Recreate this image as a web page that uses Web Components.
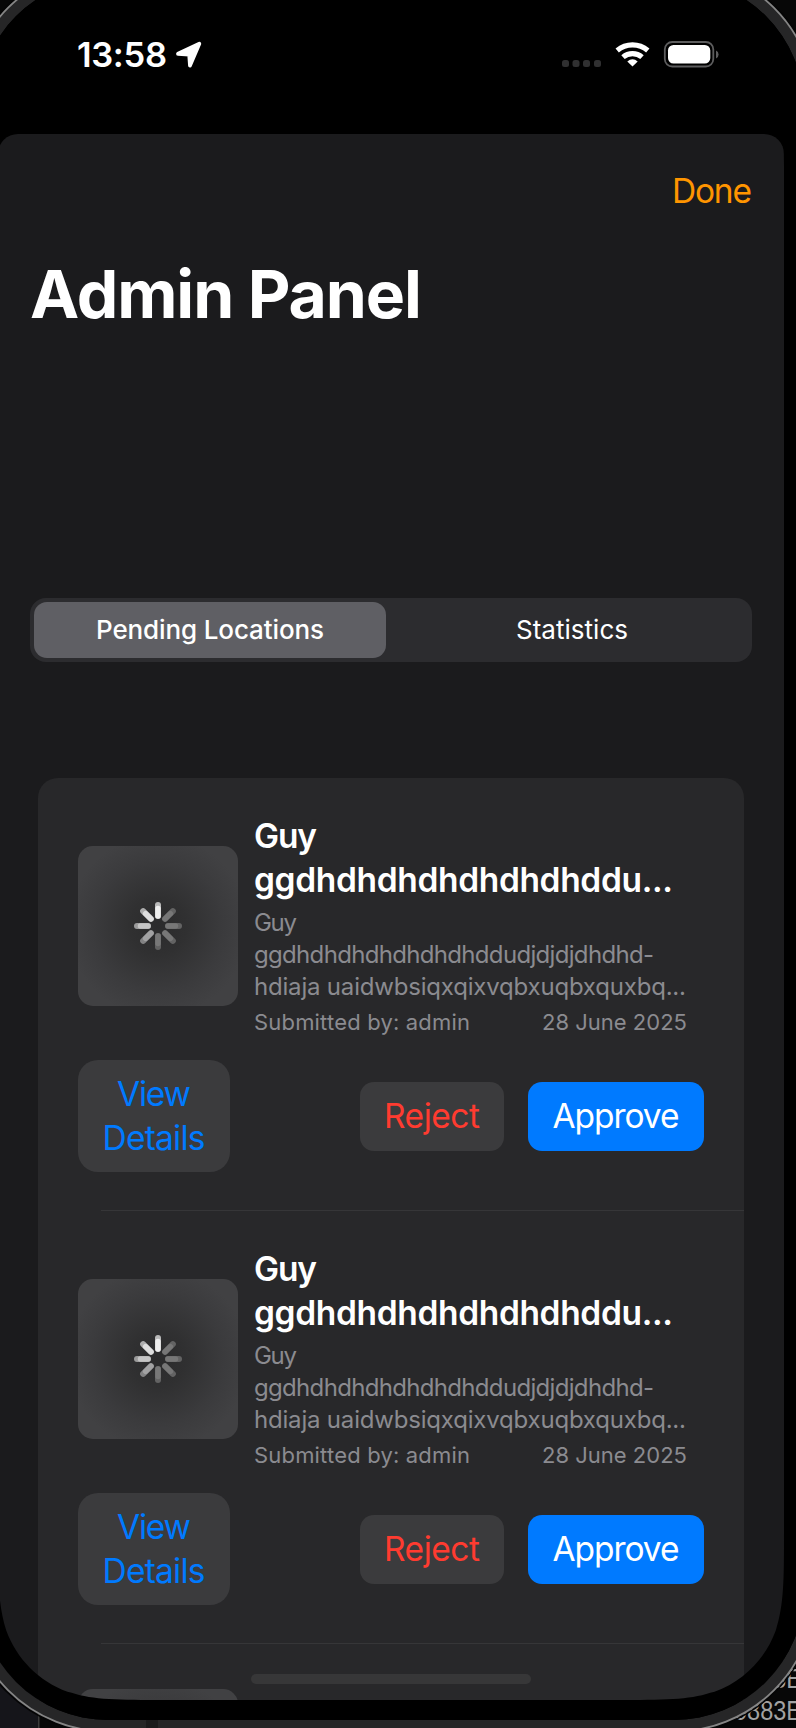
<!DOCTYPE html>
<html lang="en"><head><meta charset="utf-8"><title>Admin Panel</title>
<style>html,body{margin:0;background:#000;overflow:hidden}body{width:796px;height:1728px;font-family:Inter,"Liberation Sans",sans-serif;color:#fff}</style></head><body>
<phone-simulator>
<status-bar></status-bar>
<admin-sheet>
<segmented-control></segmented-control>
<location-list>
<location-row></location-row><location-row></location-row><location-peek></location-peek>
</location-list>
</admin-sheet>
</phone-simulator>
<script>
const define=(name,html,init)=>customElements.define(name,class extends HTMLElement{
 constructor(){super();const t=document.createElement('template');t.innerHTML=html;this.attachShadow({mode:'open'}).append(t.content.cloneNode(true));}
 connectedCallback(){if(init)init.call(this,this.shadowRoot);}
});

// One line of text, tracked so that its advance equals the w attribute.
define('fit-text',`<style>:host{display:block;white-space:nowrap;line-height:inherit}span{display:inline-block;white-space:pre}</style><span><slot></slot></span>`,function(root){
 const s=root.querySelector('span'),n=this.textContent.length,w=+this.getAttribute('w');
 this.style.width=w+'px';
 s.style.letterSpacing=((w-s.getBoundingClientRect().width)/(n-1))+'px';
});

// Rounded rectangle with Apple's continuous curvature.
const smoothRect=(x,y,w,h,r)=>{
 const a=[[1.52866,0],[1.08849,0],[.86841,0],[.66993,.0655],[.63149,.07491],[.37282,.16906],[.16906,.37282],[.07491,.63149],[0,.86841],[0,1.08849],[0,1.52866]];
 const corner=(cx,cy,sx,sy,rev)=>{
  const p=a.map(([u,v])=>[cx+sx*u*r,cy+sy*v*r].map(n=>n.toFixed(2)).join(' '));
  if(rev)p.reverse();
  return rev?`L${p[0]}C${p[1]} ${p[2]} ${p[3]}C${p[4]} ${p[5]} ${p[6]}L${p[7]}C${p[8]} ${p[9]} ${p[10]}`
            :`L${p[0]}C${p[1]} ${p[2]} ${p[3]}L${p[4]}C${p[5]} ${p[6]} ${p[7]}C${p[8]} ${p[9]} ${p[10]}`;};
 return `M${x+w/2} ${y}`+corner(x,y,1,1)+corner(x,y+h,1,-1,true)+corner(x+w,y+h,-1,-1)+corner(x+w,y,-1,1,true)+'Z';
};
// Rounded rectangle with circular corners.
const roundRect=(x,y,w,h,r)=>`M${x+r} ${y}H${x+w-r}A${r} ${r} 0 0 1 ${x+w} ${y+r}V${y+h-r}A${r} ${r} 0 0 1 ${x+w-r} ${y+h}H${x+r}A${r} ${r} 0 0 1 ${x} ${y+h-r}V${y+r}A${r} ${r} 0 0 1 ${x+r} ${y}Z`;

define('phone-frame',`<style>:host{display:block;position:absolute;inset:0;pointer-events:none}svg{display:block}</style>
<svg width="796" height="1728" viewBox="0 0 796 1728">
<defs><clipPath id="out"><path id="oc" clip-rule="evenodd"/></clipPath></defs>
<g clip-path="url(#out)"><rect width="796" height="1728" fill="#070707"/><rect width="38" height="300" y="1500" fill="#15151a"/><rect x="38" y="1600" width="1.5" height="128" fill="#3a3a3a"/>
<g fill="#a2a2a2" font-family="'Liberation Sans',sans-serif" font-size="27"><text x="773" y="1688" textLength="29" lengthAdjust="spacingAndGlyphs">3E</text><text x="734" y="1720" textLength="68" lengthAdjust="spacingAndGlyphs">0883E</text></g></g>
<path id="ring" fill="#262627" fill-rule="evenodd"/><path id="bez" fill="#000" fill-rule="evenodd"/>
<path d="M146 1720h12v8h-12z" fill="#1b1b1c"/>
<path id="edge0" fill="none" stroke="#050505" stroke-width="1.5"/><path id="edge" fill="none" stroke="#858585" stroke-width="1.8"/>
</svg>`,function(root){
 const $=i=>root.getElementById(i),big='M-60 -60H900V1900H-60Z';
 const screen=smoothRect(-2,-2,786,1702,110),bezel=roundRect(-22,-22,826,1742,130),outer=roundRect(-33.5,-33.5,849,1765,141.5);
 $('oc').setAttribute('d',big+outer);$('ring').setAttribute('d',outer+bezel);$('bez').setAttribute('d',bezel+screen);
 $('edge').setAttribute('d',outer);$('edge0').setAttribute('d',roundRect(-35.5,-35.5,853,1769,143.5));
});

define('phone-simulator',`<style>:host{display:block;position:relative;width:796px;height:1728px;overflow:hidden;background:#000}
.screen{width:784px;height:1700px;overflow:hidden}
.home{position:absolute;left:251px;top:1674px;width:280px;height:10px;border-radius:5px;background:#373738}</style>
<div class="screen"><slot></slot></div><div class="home"></div><phone-frame></phone-frame>`);

define('status-bar',`<style>:host{display:flex;height:134px;box-sizing:border-box;padding:35px 64px 0 77px;align-items:flex-start;justify-content:space-between}
.l,.r{display:flex}.l{font-size:34.5px;font-weight:580;line-height:40px}.l svg{margin:5px 0 0 8px}svg{display:block}</style>
<div class="l"><fit-text w="90">13:58</fit-text><svg width="27" height="29" viewBox="0 0 27 29"><path d="M24.300 3.700 15 25.500 14.200 14.600 3 13.800Z" fill="#fff" stroke="#fff" stroke-width="3.800" stroke-linejoin="round"/></svg></div>
<div class="r"><svg width="160" height="34" viewBox="560 35 160 34">
<g fill="#303031"><rect x="562" y="60" width="7" height="7" rx="2.500"/><rect x="572.500" y="60" width="7" height="7" rx="2.500"/><rect x="583" y="60" width="7" height="7" rx="2.500"/><rect x="594" y="60" width="7" height="7" rx="2.500"/></g>
<g fill="none" stroke="#fff" stroke-width="5.200"><path d="M617.200 50.400a24 24 0 0 1 30.600 0"/><path d="M623 57.100a14.500 14.500 0 0 1 19 0"/></g><path d="M632.500 66.500 627.300 61.500Q632.500 57 637.700 61.500Z" fill="#fff"/>
<rect x="664.800" y="42" width="48.500" height="24.500" rx="7.500" fill="none" stroke="#5d5d5e" stroke-width="1.800"/><rect x="668" y="45" width="42.300" height="18.500" rx="5.500" fill="#fff"/><path d="M716 50.500q2.600 1.200 2.600 4t-2.600 4z" fill="#5d5d5e"/></svg></div>`);

define('admin-sheet',`<style>:host{display:flex;flex-direction:column;box-sizing:border-box;margin-left:-2px;width:786px;height:1566px;background:#1b1b1d;border-radius:20px 20px 0 0;overflow:hidden;padding:0 32px}
.done{align-self:flex-end;margin-top:37px;font-size:33.5px;line-height:40px;color:#ff9500}
h1{margin:43px 0 264px;font-size:66px;line-height:80px;font-weight:700}</style>
<fit-text class="done" w="80">Done</fit-text><h1><fit-text w="392">Admin Panel</fit-text></h1><slot></slot>`);

define('segmented-control',`<style>:host{display:flex;box-sizing:border-box;height:64px;flex:none;padding:4px;border-radius:16px;background:#2c2c2f;font-size:26px;line-height:32px}
div{display:flex;align-items:center;justify-content:center;box-sizing:border-box}.on{flex:none;width:352px;background:#5f5f64;border-radius:13px;font-weight:500}.off{flex:1;margin-left:10px}</style>
<div class="on"><fit-text w="228">Pending Locations</fit-text></div><div class="off"><fit-text w="112">Statistics</fit-text></div>`);

define('location-list',`<style>:host{display:block;flex:none;margin:116px 8px 0;height:922px;background:#28282a;border-radius:20px 20px 0 0;overflow:hidden}</style><slot></slot>`);

define('activity-spinner',`<style>:host{display:block}svg{display:block}</style><svg width="48" height="48" viewBox="-24 -24 48 48"></svg>`,function(root){
 const c=['#eee','#777','#777','#777','#777','#a2a2a3','#c5c5c5','#dedede'];
 root.querySelector('svg').innerHTML=c.map((k,i)=>`<g transform="rotate(${i*45})" stroke="${k}" stroke-linecap="round"><path d="M0-10V-21" stroke-width="6" opacity=".72"/><path d="M0-10V-17.500" stroke-width="5.500"/></g>`).join('');
});

define('image-thumb',`<style>:host{width:160px;height:160px;flex:none;border-radius:15px;display:flex;align-items:center;justify-content:center;background:radial-gradient(circle,#2b2b2c 0,#303031 25%,#3b3b3d 58%,#414143 80%)}</style><activity-spinner></activity-spinner>`);

// A row of which only the top of the thumbnail is scrolled into view.
define('location-peek',`<style>:host{display:block;padding:45px 40px 0}div{height:11px;overflow:hidden}</style><div><image-thumb></image-thumb></div>`);

define('tinted-button',`<style>:host{display:flex;box-sizing:border-box;align-items:center;justify-content:center;background:#3b3b3d;border-radius:14px;font-size:33.5px;line-height:44px}</style><slot></slot>`);

define('location-row',`<style>:host{display:flex;flex-direction:column;box-sizing:border-box;height:433px;padding:36px 40px 0;position:relative}
:host::after{content:"";position:absolute;left:63px;right:0;bottom:0;height:1px;background:#363638}
.top{display:flex;gap:16px;align-items:center;height:228px}
image-thumb{margin-top:-4px}
.text{width:440px;align-self:flex-start}
.title{font-size:33.5px;font-weight:600;line-height:44px}
.desc{font-size:24px;line-height:32px;margin-top:5px;color:#8b8b90}
.meta{display:flex;justify-content:space-between;width:433px;font-size:22px;line-height:30px;margin-top:4px;color:#8b8b90}
.actions{display:flex;align-items:center;height:112px;margin-top:18px}
.view{width:152px;height:112px;flex-direction:column;color:#007aff;border-radius:20px}
.reject{width:144px;height:69px;margin-left:auto;color:#ff3b30}
.approve{width:176px;height:69px;margin-left:24px;background:#007aff}</style>
<div class="top"><image-thumb></image-thumb>
<div class="text"><div class="title"><fit-text w="63">Guy</fit-text><fit-text w="419">ggdhdhdhdhdhdhdhddu...</fit-text></div>
<div class="desc"><fit-text w="43">Guy</fit-text><fit-text w="400">ggdhdhdhdhdhdhdhddudjdjdjdhdhd-</fit-text><fit-text w="432">hdiaja uaidwbsiqxqixvqbxuqbxquxbq...</fit-text></div>
<div class="meta"><fit-text w="216">Submitted by: admin</fit-text><fit-text w="145">28 June 2025</fit-text></div></div></div>
<div class="actions"><tinted-button class="view"><fit-text w="74">View</fit-text><fit-text w="103">Details</fit-text></tinted-button>
<tinted-button class="reject"><fit-text w="96">Reject</fit-text></tinted-button><tinted-button class="approve"><fit-text w="127">Approve</fit-text></tinted-button></div>`);
</script></body></html>
